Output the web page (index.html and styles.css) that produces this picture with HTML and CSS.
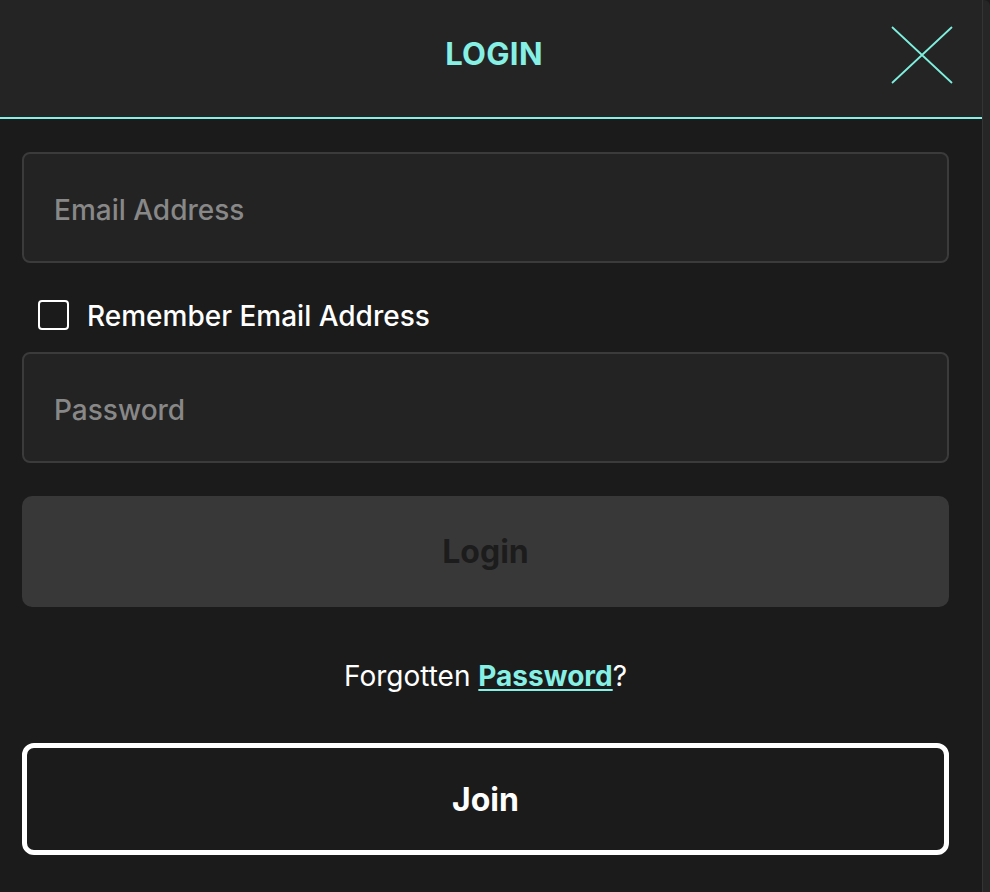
FILE: index.html
```html
<!DOCTYPE html>
<html lang="en">
<head>
<meta charset="utf-8">
<title>Login</title>
<link rel="stylesheet" href="styles.css">
</head>
<body>
<div class="page">
  <div class="modal">
    <header class="modal-header">
      <h1 class="title">LOGIN</h1>
      <button class="close" aria-label="Close">
        <svg width="62" height="58" viewBox="0 0 62 58">
          <path d="M1 1 L61 57 M61 1 L1 57" stroke="#7eeedd" stroke-width="1.8" fill="none"/>
        </svg>
      </button>
    </header>
    <form class="modal-body">
      <div class="field"><span class="placeholder">Email Address</span></div>
      <label class="remember"><span class="box"></span><span class="remember-text">Remember Email Address</span></label>
      <div class="field"><span class="placeholder">Password</span></div>
      <div class="btn-login">Login</div>
      <p class="forgot">Forgotten <a href="#">Password</a>?</p>
      <div class="btn-join">Join</div>
    </form>
  </div>
  <div class="scrolltrack"></div>
</div>
</body>
</html>
```

FILE: styles.css
```css
html, body {
  margin: 0;
  padding: 0;
  background: #1b1b1b;
  height: 100%;
}
body {
  font-family: Inter, "Noto Sans", sans-serif;
  color: #fff;
}
.page {
  display: flex;
  height: 892px;
  overflow: hidden;
}
.modal {
  flex: 0 0 982px;
  display: flex;
  flex-direction: column;
  background: #1b1b1b;
}
.scrolltrack {
  flex: 1;
  background: #262626;
  border-left: 1px solid #343434;
  border-top-right-radius: 6px;
}
.modal-header {
  height: 117px;
  background: #242424;
  border-bottom: 2px solid #86eee4;
  display: flex;
  align-items: center;
  justify-content: center;
  position: relative;
}
.title {
  margin: 0;
  font-size: 31px;
  font-weight: 700;
  color: #86f0e4;
  letter-spacing: 0.3px;
  transform: translate(3px, -5px);
}
.close {
  position: absolute;
  left: 891px;
  top: 26px;
  width: 62px;
  height: 58px;
  padding: 0;
  border: 0;
  background: none;
  display: block;
}
.close svg { display: block; }
.modal-body {
  margin: 0;
  padding: 33px 33px 0 22px;
  display: flex;
  flex-direction: column;
}
.field {
  height: 107px;
  border: 2px solid #3b3b3b;
  border-radius: 8px;
  background: #232323;
  display: flex;
  align-items: center;
  padding-left: 30px;
}
.placeholder {
  font-size: 28px;
  font-weight: 500;
  color: #888;
  transform: translateY(2px);
}
.remember {
  display: flex;
  align-items: center;
  height: 75px;
  padding-top: 14px;
  padding-left: 16px;
  gap: 18px;
  font-size: 28px;
  font-weight: 500;
  color: #fff;
}
.remember-text {
  transform: translateY(1px);
}
.box {
  width: 27px;
  height: 26px;
  border: 2px solid #fff;
  border-radius: 4px;
  flex: none;
}
.btn-login {
  margin-top: 33px;
  height: 111px;
  border-radius: 10px;
  background: #383838;
  color: #1c1c1c;
  font-size: 32px;
  font-weight: 700;
  display: flex;
  align-items: center;
  justify-content: center;
}
.forgot {
  margin: 0;
  height: 136px;
  padding-top: 2px;
  box-sizing: border-box;
  display: flex;
  align-items: center;
  justify-content: center;
  font-size: 28px;
  font-weight: 400;
  color: #fff;
  white-space: pre;
}
.forgot a {
  color: #86f0e4;
  font-weight: 700;
  text-decoration: underline;
  text-underline-offset: 3px;
  text-decoration-thickness: 2px;
}
.btn-join {
  height: 102px;
  border: 5px solid #fff;
  border-radius: 12px;
  background: #1b1b1b;
  color: #fff;
  font-size: 32px;
  font-weight: 700;
  display: flex;
  align-items: center;
  justify-content: center;
}
```
